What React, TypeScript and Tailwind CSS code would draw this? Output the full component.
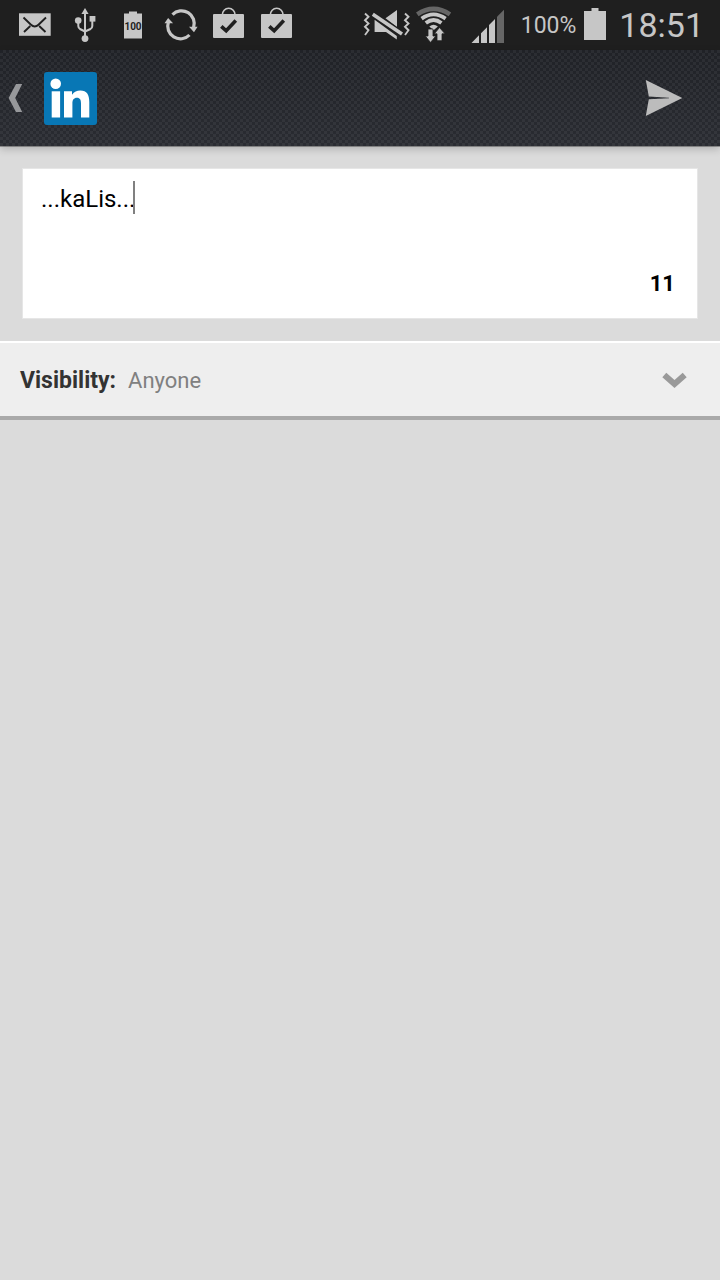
import { useState } from "react";

const LIGHT = "#c6c6c6";

function MailIcon() {
  return (
    <svg className="h-[50px] w-12" viewBox="13 0 48 50" aria-hidden="true">
      <rect x="19" y="13.3" width="31.7" height="22.5" fill={LIGHT} />
      <path d="M23.5 17.5 31 24.7Q34.7 28.3 38.5 24.7L46 17.5M24 32 30.3 26M45.5 32 39.2 26" fill="none" stroke="#1f1f1f" strokeWidth="1.9" />
    </svg>
  );
}

function UsbIcon() {
  return (
    <svg className="h-[50px] w-12" viewBox="61 0 48 50" aria-hidden="true">
      <path d="M85 12V38M85 31.5 80 29Q78.3 28 78.3 26V21M85 31.5 90.5 29Q92.3 28 92.3 26V20" fill="none" stroke={LIGHT} strokeWidth="2" />
      <path d="M85 8 88.6 14H81.4Z" fill={LIGHT} />
      <circle cx="78.2" cy="20.6" r="3.3" fill={LIGHT} />
      <rect x="89.6" y="16" width="5.8" height="5.6" fill={LIGHT} />
      <circle cx="85" cy="38.6" r="3.4" fill={LIGHT} />
    </svg>
  );
}

function BatteryFullIcon() {
  return (
    <svg className="h-[50px] w-12" viewBox="109 0 48 50" aria-hidden="true">
      <path d="M124 13.5H129V11.5H137V13.5H142V38.6H124Z" fill={LIGHT} />
      <text x="133" y="30.2" textAnchor="middle" fontFamily="Roboto, sans-serif" fontWeight="700" fontSize="10" fill="#1f1f1f">100</text>
    </svg>
  );
}

function SyncIcon() {
  return (
    <svg className="h-[50px] w-12" viewBox="157 0 48 50" aria-hidden="true">
      <path d="M172.5 14.6A12.7 12.7 0 0 1 193.6 27.5M189.5 35A12.7 12.7 0 0 1 168.4 22" fill="none" stroke={LIGHT} strokeWidth="3.2" />
      <path d="M189 26.8H197.6L194 32.2ZM164.5 23.2H173.1L168.1 18Z" fill={LIGHT} />
    </svg>
  );
}

function BagIcon() {
  return (
    <svg className="h-[50px] w-12" viewBox="205 0 48 50" aria-hidden="true">
      <rect x="213" y="14" width="31" height="24" rx="1" fill={LIGHT} />
      <path d="M222.3 15A6.4 6.7 0 0 1 235.1 15" fill="none" stroke={LIGHT} strokeWidth="1.6" />
      <path d="M221.3 26.3 226.2 30.8 235.8 20.6" fill="none" stroke="#1f1f1f" strokeWidth="3.6" />
    </svg>
  );
}

function MuteIcon() {
  return (
    <svg className="h-[50px] w-[52px]" viewBox="362 0 52 50" aria-hidden="true">
      <path d="M374.6 19.8 396.8 36V39.4L386 32H374.6ZM385.5 18.3 397 10V27Z" fill={LIGHT} />
      <path d="M372.8 14.3 402 34" stroke="#1f1f1f" strokeWidth="6" />
      <path d="M372.8 14.3 402 34" stroke={LIGHT} strokeWidth="3.6" />
      <path d="M365 13.5 368.5 16.8 365 20.2 368.5 23.5 365 26.8 368.5 30.2 365 35M405 13.5 408.5 16.8 405 20.2 408.5 23.5 405 26.8 408.5 30.2 405 35" fill="none" stroke={LIGHT} strokeWidth="1.9" />
    </svg>
  );
}

function WifiIcon() {
  return (
    <svg className="h-[50px] w-10" viewBox="415 0 40 50" aria-hidden="true">
      <path d="M418.3 14.3Q434.5 3.3 450.9 14.3" fill="none" stroke="#666" strokeWidth="4.6" />
      <path d="M422.6 18.6Q434.5 10.2 446.6 18.6M426.8 23Q434.5 17 442.4 23" fill="none" stroke={LIGHT} strokeWidth="3.8" />
      <path d="M430.3 26.5Q434.5 23 438.9 26.5L434.6 30.2Z" fill={LIGHT} />
      <path d="M429 29H434V36H436.8L431.5 42.5 426.3 36H429ZM438 40.7H443V33.8H446L440.5 27.5 435.3 33.8H438Z" fill={LIGHT} stroke="#1f1f1f" strokeWidth="0.8" />
    </svg>
  );
}

function SignalIcon() {
  return (
    <svg className="h-[50px] w-[51px]" viewBox="455 0 51 50" aria-hidden="true">
      <path d="M472.5 43 480 35.3V43ZM482 43V33.3L488 27.2V43ZM490 43V25L496 19V43Z" fill={LIGHT} />
      <path d="M498 43V16.8L505 9.8V43Z" fill="#666" />
    </svg>
  );
}

function StatusBar() {
  return (
    <div className="flex h-[50px] items-center justify-between bg-[#1f1f1f] pr-4 pl-[13px] text-[#c6c6c6]">
      <div className="flex">
        <MailIcon />
        <UsbIcon />
        <BatteryFullIcon />
        <SyncIcon />
        <BagIcon />
        <BagIcon />
      </div>
      <div className="flex items-center">
        <MuteIcon />
        <WifiIcon />
        <SignalIcon />
        <span className="ml-4 pt-0.5 text-[23px] leading-8">100%</span>
        <svg className="ml-2 h-[50px] w-[22px]" viewBox="584 0 22 50" aria-hidden="true">
          <path d="M584 11H591.5V8H598.5V11H606V40H584Z" fill={LIGHT} />
        </svg>
        <time className="ml-[13px] text-[34px] leading-10">18:51</time>
      </div>
    </div>
  );
}

function ActionBar() {
  return (
    <header className="relative z-10 flex h-24 items-center justify-between bg-[#24262b] bg-[conic-gradient(#ffffff0d_25%,transparent_0_50%,#ffffff0d_0_75%,transparent_0),linear-gradient(#202227,#2a2c32)] bg-[size:6px_6px,100%_100%] pr-[37px] pl-2 shadow-[0_1px_0_#0000004d,0_3px_8px_#00000033]">
      <button type="button" aria-label="Back" className="flex items-center gap-[21px]">
        <svg className="h-[30px] w-[15px]" viewBox="0 0 15 30" aria-hidden="true">
          <path d="M8 1H14.2L7.2 15 14.2 29H8L.6 15Z" fill="#97989b" />
        </svg>
        <svg className="h-[54px] w-[54px]" viewBox="0 0 54 54" aria-hidden="true">
          <rect y="1" width="53" height="53" rx="3" fill="#0877b5" />
          <g fill="#fff">
            <circle cx="11.7" cy="12.7" r="5.3" />
            <rect x="7.7" y="20.3" width="8.4" height="26.2" />
            <path d="M20 20.3H28V23.8Q31.2 19.6 36.3 19.6C43 19.6 45.3 24 45.3 31V46.5H37V32.5C37 29 36 26.8 33 26.8 29.7 26.8 28.4 29 28.4 32.5V46.5H20Z" />
          </g>
        </svg>
      </button>
      <button type="submit" form="share" aria-label="Send">
        <svg className="h-9 w-[38px]" viewBox="645 80 38 36" aria-hidden="true">
          <path d="M645.8 80 682.3 98 645.8 116 648.8 99.2 669 98.2V97.8L648.8 96.6Z" fill="#bcbcbc" />
        </svg>
      </button>
    </header>
  );
}

export default function App() {
  const [text, setText] = useState("...kaLis...");

  return (
    <div className="min-h-screen bg-[#dbdbdb] font-[Roboto,sans-serif]">
      <StatusBar />
      <ActionBar />
      <form id="share" onSubmit={(e) => e.preventDefault()}>
        <div className="p-[22px]">
          <div className="relative flex h-[151px] flex-col border border-[#e6e6e6] bg-white">
            <textarea
              aria-label="Update"
              value={text}
              onChange={(e) => setText(e.target.value)}
              className="block w-full flex-1 resize-none bg-transparent px-[18px] pt-[14px] text-[24px] leading-8 text-black outline-none"
            />
            <span aria-hidden="true" className="absolute top-3 left-[110px] h-[33px] w-0.5 bg-[#808080]" />
            <output className="pr-[22px] pb-5 text-right text-[22px] leading-7 font-bold text-black">11</output>
          </div>
        </div>
        <div className="relative flex h-[79px] items-center border-t-2 border-b-4 border-t-white border-b-[#a9a9a9] bg-[#eee] px-5 pt-0.5">
          <label htmlFor="visibility" className="text-[23px] leading-8 font-bold text-[#333]">Visibility:</label>
          <select id="visibility" className="ml-3 flex-1 appearance-none bg-transparent text-[22px] leading-8 text-[#808080] outline-none">
            <option>Anyone</option>
          </select>
          <svg className="pointer-events-none absolute right-8 h-5 w-[27px]" viewBox="0 0 27 20" aria-hidden="true">
            <path d="M3.3 4 13.5 13 23.7 4" fill="none" stroke="#999" strokeWidth="6" />
          </svg>
        </div>
      </form>
    </div>
  );
}
